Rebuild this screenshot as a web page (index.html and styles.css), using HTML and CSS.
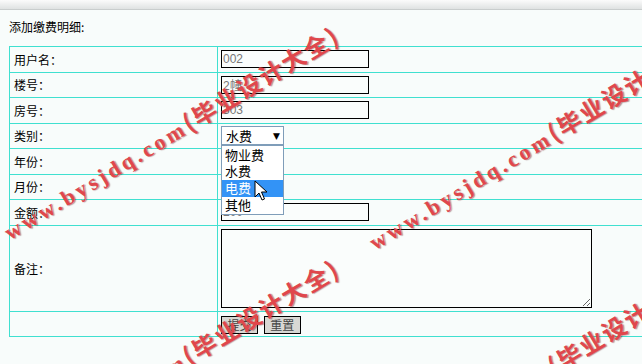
FILE: index.html
```html
<!DOCTYPE html>
<html lang="zh-CN">
<head>
  <meta charset="UTF-8" />
  <title>添加缴费明细</title>
  <link rel="stylesheet" href="styles.css">
</head>
<body>

  <div class="topbar"></div>
  <div class="title">添加缴费明细:</div>

  <table class="form">
    <tr>
      <td class="label">用户名：</td>
      <td><input class="text" type="text" value="002"></td>
    </tr>
    <tr>
      <td class="label">楼号：</td>
      <td><input class="text" type="text" value="2幢"></td>
    </tr>
    <tr>
      <td class="label">房号：</td>
      <td><input class="text" type="text" value="303"></td>
    </tr>
    <tr>
      <td class="label">类别：</td>
      <td class="select-cell">
        <div class="select">
          <span>水费</span><span class="arrow">▼</span>
        </div>
        <ul class="options">
          <li>物业费</li>
          <li>水费</li>
          <li class="active">电费</li>
          <li>其他</li>
        </ul>
        <svg class="cursor" width="14" height="22" viewBox="0 0 14 22">
          <path d="M1 1 L1 17 L5 13 L8 20 L10.5 19 L7.5 12 L13 12 Z" fill="#fff" stroke="#000" stroke-width="1" stroke-linejoin="round"/>
        </svg>
      </td>
    </tr>
    <tr>
      <td class="label">年份：</td>
      <td></td>
    </tr>
    <tr>
      <td class="label">月份：</td>
      <td></td>
    </tr>
    <tr>
      <td class="label">金额：</td>
      <td><input class="text" type="text" value="200"></td>
    </tr>
    <tr class="tall">
      <td class="label">备注：</td>
      <td><textarea class="note"></textarea></td>
    </tr>
    <tr>
      <td></td>
      <td><button class="btn">提交</button> <button class="btn">重置</button></td>
    </tr>
  </table>

  <div class="watermarks">
    <span class="wm wm-a">www.bysjdq.com<span class="cn">(毕业设计大全)</span></span>
    <span class="wm wm-b">www.bysjdq.com<span class="cn">(毕业设计大全)</span></span>
    <span class="wm wm-c">www.bysjdq.com<span class="cn">(毕业设计大全)</span></span>
    <span class="wm wm-d">www.bysjdq.com<span class="cn">(毕业设计大全)</span></span>
  </div>

</body>
</html>
```

FILE: styles.css
```css
html, body {
  margin: 0;
  overflow: hidden;
  height: 100%;
}
body {
  position: relative;
  background: #f8fcfb;
  font-family: "Noto Sans CJK SC", "Liberation Sans", sans-serif;
  font-size: 12px;
  color: #000;
}
.topbar {
  height: 9px;
  background: linear-gradient(#fbfbfb, #dfe2e2);
  border-bottom: 1px solid #c9cdcd;
}
.title {
  margin: 9px 0 0 9px;
  line-height: 16px;
}
.form {
  margin: 11px 0 0 9px;
  width: 680px;
  border-collapse: collapse;
}
.form td {
  border: 1px solid #40e0d0;
  height: 24.5px;
  padding: 0 3px;
  vertical-align: middle;
}
.form td.label {
  width: 200px;
  padding-left: 4px;
}
.form tr.tall td {
  height: 85px;
}
.text {
  display: block;
  box-sizing: border-box;
  width: 148px;
  height: 18px;
  margin: 0;
  padding: 0 1px;
  border: 1px solid #000;
  background: #fafdfc;
  font-family: "Liberation Sans", sans-serif;
  font-size: 12px;
  color: #777;
}
.note {
  display: block;
  box-sizing: border-box;
  width: 371px;
  height: 79px;
  margin: 0;
  border: 1px solid #000;
  background: #fafdfc;
}
.btn {
  box-sizing: border-box;
  width: 37px;
  height: 18px;
  margin: 0 3px 0 0;
  padding: 0;
  border: 1px solid #000;
  background: #d8d8d4;
  font-family: "Noto Sans CJK SC", sans-serif;
  font-size: 12px;
  line-height: 16px;
  color: #444;
  vertical-align: middle;
}
.select-cell {
  position: relative;
}
.select {
  box-sizing: border-box;
  width: 63px;
  height: 19px;
  border: 1px solid #7f9db9;
  background: #fff;
  display: flex;
  align-items: center;
  justify-content: space-between;
  padding: 0 3px 0 4px;
  font-size: 13px;
}
.arrow {
  font-size: 9px;
  font-family: "DejaVu Sans", sans-serif;
}
.options {
  position: absolute;
  left: 3px;
  top: 21px;
  z-index: 2;
  box-sizing: border-box;
  width: 63px;
  margin: 0;
  padding: 1px 0;
  list-style: none;
  background: #fff;
  border: 1px solid #7f9db9;
  font-size: 13px;
}
.options li {
  height: 16.7px;
  line-height: 16.7px;
  padding-left: 3px;
}
.options li.active {
  background: #3393f6;
  color: #fff;
}
.cursor {
  position: absolute;
  left: 36px;
  top: 56px;
  z-index: 3;
}
.watermarks {
  position: absolute;
  inset: 0;
  pointer-events: none;
  z-index: 5;
}
.wm {
  position: absolute;
  white-space: nowrap;
  font-family: "Liberation Serif", "Noto Sans CJK SC", serif;
  font-weight: bold;
  font-size: 22px;
  line-height: 22px;
  letter-spacing: 3.5px;
  color: #e0474c;
  text-shadow: 1px 1px 1px rgba(90, 20, 20, 0.45);
  transform-origin: 0 100%;
  transform: rotate(-31deg);
}
.wm .cn {
  font-family: "Noto Sans CJK SC", sans-serif;
  font-size: 24px;
  letter-spacing: 2px;
}
.wm-a { left: 12px; top: 219px; }
.wm-b { left: 377px; top: 229px; }
.wm-c { left: 12px; top: 452px; }
.wm-d { left: 377px; top: 462px; }
```
